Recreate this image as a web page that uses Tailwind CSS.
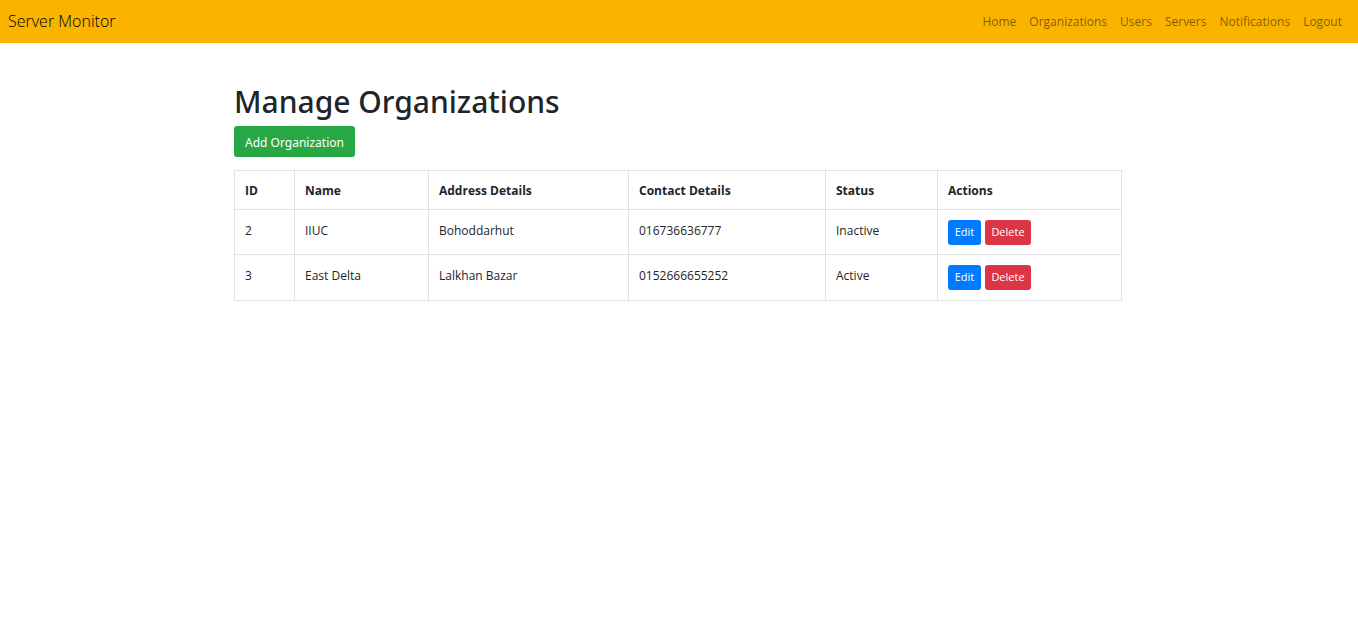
<!DOCTYPE html>
<html lang="en">
<head>
<meta charset="utf-8">
<meta name="viewport" content="width=device-width, initial-scale=1">
<title>Server Monitor</title>
<script src="https://cdn.jsdelivr.net/npm/@tailwindcss/browser@4"></script>
</head>
<body class="bg-white font-['Open_Sans',sans-serif] text-xs text-[#212529]">
<header class="flex flex-wrap items-start justify-between bg-[#fab400] px-2 pt-2 pb-2">
  <a href="#" class="text-[16px] leading-[26px] font-light text-black">Server Monitor</a>
  <nav class="flex flex-wrap gap-x-[13px] pr-2 leading-[27px] text-black/50">
    <a href="#">Home</a>
    <a href="#">Organizations</a>
    <a href="#">Users</a>
    <a href="#">Servers</a>
    <a href="#">Notifications</a>
    <a href="#">Logout</a>
  </nav>
</header>
<main class="mx-auto max-w-[890px] pt-10 pr-[2px]">
  <h1 class="font-['Noto_Sans',sans-serif] text-[30px] leading-[38px] font-medium">Manage Organizations</h1>
  <button type="button" class="mt-[5px] block h-[31px] min-w-[121px] rounded-[3px] bg-[#28a745] px-[10px] pt-[2px] font-['Noto_Sans',sans-serif] text-white">Add Organization</button>
  <table class="mt-[13px] w-full table-fixed border-collapse text-left [&_td]:border [&_td]:border-[#dee2e6] [&_td]:px-[10px] [&_td]:pt-[10px] [&_td]:pb-[9px] [&_td]:align-top [&_th]:border [&_th]:border-[#dee2e6] [&_th]:px-[10px] [&_th]:pt-[2px]">
    <colgroup><col class="w-[60px]"><col class="w-[134px]"><col class="w-[200px]"><col class="w-[197px]"><col class="w-[112px]"><col></colgroup>
    <thead>
      <tr class="h-[39px]"><th>ID</th><th>Name</th><th>Address Details</th><th>Contact Details</th><th>Status</th><th>Actions</th></tr>
    </thead>
    <tbody class="leading-[22px]">
      <tr class="h-[45px]"><td>2</td><td>IIUC</td><td>Bohoddarhut</td><td>016736636777</td><td>Inactive</td><td><div class="flex gap-1 text-[11px]"><button type="button" class="h-[25px] w-[33px] rounded-[3px] bg-[#007bff] pb-[2px] text-white">Edit</button><button type="button" class="h-[25px] w-[46px] rounded-[3px] bg-[#dc3545] pb-[2px] text-white">Delete</button></div></td></tr>
      <tr class="h-[46px]"><td>3</td><td>East Delta</td><td>Lalkhan Bazar</td><td>0152666655252</td><td>Active</td><td><div class="flex gap-1 text-[11px]"><button type="button" class="h-[25px] w-[33px] rounded-[3px] bg-[#007bff] pb-[2px] text-white">Edit</button><button type="button" class="h-[25px] w-[46px] rounded-[3px] bg-[#dc3545] pb-[2px] text-white">Delete</button></div></td></tr>
    </tbody>
  </table>
</main>
</body>
</html>
